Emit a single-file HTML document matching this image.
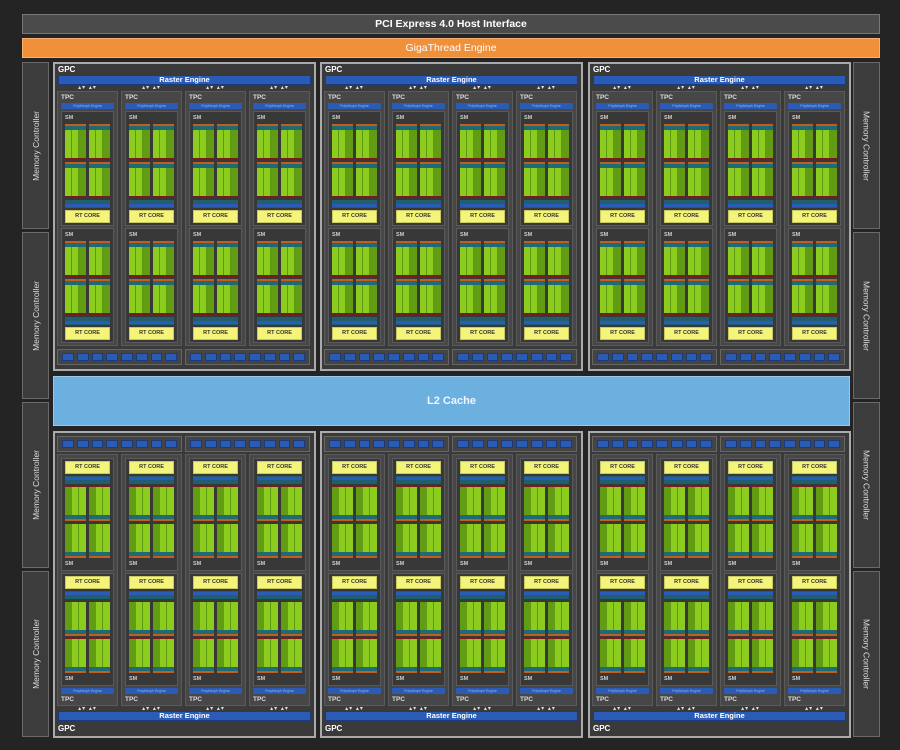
<!DOCTYPE html>
<html><head><meta charset="utf-8"><style>
*{box-sizing:border-box}
body{margin:0;background:#242424;width:900px;height:750px;position:relative;overflow:hidden;font-family:"Liberation Sans",sans-serif}
.pci{position:absolute;left:22px;top:14px;width:858px;height:20px;background:#4b4b4b;border:1px solid #777;color:#fff;font-size:10.5px;font-weight:bold;text-align:center;line-height:18px}
.giga{position:absolute;left:22px;top:38px;width:858px;height:20px;background:#f0903a;border:1px solid #f8b070;color:#fff;font-size:10.5px;text-align:center;line-height:18px}
.mc{position:absolute;width:27px;background:#3c3c3c;border:1px solid #6a6a6a;display:flex;align-items:center;justify-content:center;color:#ddd;font-size:8.5px}
.mc span{writing-mode:vertical-rl;white-space:nowrap}
.mc.l span{transform:rotate(180deg)}
.l2{position:absolute;left:53px;top:376px;width:797px;height:50px;background:#6cb0e0;border:1px solid #9cc8e8;color:#eef6ff;font-size:11px;font-weight:bold;text-align:center;line-height:48px}
.gpc{position:absolute;width:263px;height:309px;border:2px solid #aaa;background:#3a3a3a}
.gpc.bot{height:307px}
.gl{position:absolute;left:3px;top:1px;color:#fff;font-size:8px;font-weight:bold}
.re{position:absolute;left:3px;top:11px;width:253px;height:10px;background:#2a5bb5;border:1px solid #1a3a80;color:#fff;font-size:7.5px;font-weight:bold;text-align:center;line-height:8px}
.ar{position:absolute;left:2px;top:21px;display:flex;gap:3px}
.ar span{width:61px;text-align:center;color:#ddd;font-size:6px;line-height:6px;letter-spacing:1px}
.tpcs{position:absolute;left:2px;top:27px;display:flex;gap:3px}
.tpc{width:61px;height:255px;display:flex;flex-direction:column;gap:2px;padding:2px 3px;background:#474747;border:1px solid #5a5a5a}
.tpc>i{display:block;height:7px;font-style:normal;color:#ddd;font-size:6.5px;font-weight:bold;line-height:7px}
.tpc>p{margin:0;height:6px;background:#2a5bb5;color:#9bb8e8;font-size:3.5px;text-align:center;line-height:6px;white-space:nowrap;overflow:hidden}
.sm{height:115px;display:flex;flex-direction:column;gap:2px;padding:2px 3px;background:#383838;border:1px solid #5a5a5a}
.sm>i{display:block;height:8px;font-style:normal;color:#ccc;font-size:5.5px;font-weight:bold;line-height:8px}
.sm>b{display:block;height:37px;background:
 linear-gradient(to right,transparent 0 21px,#383838 21px 24px,transparent 24px) 0 0/24px 100% repeat-x,
 linear-gradient(to bottom,#c0601a 0 2px,#1e6a78 2px 6px,transparent 6px 34px,#7a1a1a 34px) ,
 linear-gradient(to right,#8ccc1e 0 6px,#5e9a10 6px 7px,#8ccc1e 7px 13px,#5e9a10 13px 14px,#629c12 14px 21px) 0 0/24px 100% repeat-x}
.bot .sm>b{background:
 linear-gradient(to right,transparent 0 21px,#383838 21px 24px,transparent 24px) 0 0/24px 100% repeat-x,
 linear-gradient(to top,#c0601a 0 2px,#1e6a78 2px 6px,transparent 6px 34px,#7a1a1a 34px),
 linear-gradient(to right,#629c12 0 7px,#8ccc1e 7px 13px,#5e9a10 13px 14px,#8ccc1e 14px 21px) 0 0/24px 100% repeat-x}
.sm>s{display:block;height:8px;background:linear-gradient(to bottom,#1f5f6e 0 4px,#2a5bb5 4px 7px,#1f5f6e 7px)}
.bot .sm>s{background:linear-gradient(to top,#1f5f6e 0 4px,#2a5bb5 4px 7px,#1f5f6e 7px)}
.sm>u{display:block;height:13px;background:#f4f47a;border:1px solid #c8c860;color:#333;font-size:5.5px;font-weight:bold;text-align:center;line-height:11px;text-decoration:none}
.st{position:absolute;left:2px;top:285px;display:flex;gap:3px}
.g{width:125px;height:16px;background:#444;border:1px solid #666;display:flex;gap:3px;padding:3px 4px}
.g span{flex:1;background:#2a5bb5;border:1px solid #1a3a80}
.bot .tpc,.bot .sm{flex-direction:column-reverse}
.bot .tpc{height:252px}
.bot .sm{height:113px}
.bot .sm>b{height:36px}
.bot .st{top:3px}
.bot .tpcs{top:21px}
.bot .ar{top:273px}
.bot .re{top:278px}
.bot .gl{top:291px}
</style></head><body>
<div class="pci">PCI Express 4.0 Host Interface</div>
<div class="giga">GigaThread Engine</div>
<div class="mc l" style="left:22px;top:62px;height:167px"><span>Memory Controller</span></div>
<div class="mc l" style="left:22px;top:232px;height:167px"><span>Memory Controller</span></div>
<div class="mc l" style="left:22px;top:402px;height:166px"><span>Memory Controller</span></div>
<div class="mc l" style="left:22px;top:571px;height:166px"><span>Memory Controller</span></div>
<div class="mc" style="left:853px;top:62px;height:167px"><span>Memory Controller</span></div>
<div class="mc" style="left:853px;top:232px;height:167px"><span>Memory Controller</span></div>
<div class="mc" style="left:853px;top:402px;height:166px"><span>Memory Controller</span></div>
<div class="mc" style="left:853px;top:571px;height:166px"><span>Memory Controller</span></div>
<div class="l2">L2 Cache</div>

<div class="gpc" style="left:53px;top:62px"><div class="gl">GPC</div><div class="re">Raster Engine</div><div class="ar"><span>▴▾ ▴▾</span><span>▴▾ ▴▾</span><span>▴▾ ▴▾</span><span>▴▾ ▴▾</span></div><div class="tpcs">
<div class="tpc"><i>TPC</i><p>PolyMorph Engine</p><div class="sm"><i>SM</i><b></b><b></b><s></s><u>RT CORE</u></div><div class="sm"><i>SM</i><b></b><b></b><s></s><u>RT CORE</u></div></div>
<div class="tpc"><i>TPC</i><p>PolyMorph Engine</p><div class="sm"><i>SM</i><b></b><b></b><s></s><u>RT CORE</u></div><div class="sm"><i>SM</i><b></b><b></b><s></s><u>RT CORE</u></div></div>
<div class="tpc"><i>TPC</i><p>PolyMorph Engine</p><div class="sm"><i>SM</i><b></b><b></b><s></s><u>RT CORE</u></div><div class="sm"><i>SM</i><b></b><b></b><s></s><u>RT CORE</u></div></div>
<div class="tpc"><i>TPC</i><p>PolyMorph Engine</p><div class="sm"><i>SM</i><b></b><b></b><s></s><u>RT CORE</u></div><div class="sm"><i>SM</i><b></b><b></b><s></s><u>RT CORE</u></div></div>
</div><div class="st"><div class="g"><span></span><span></span><span></span><span></span><span></span><span></span><span></span><span></span></div><div class="g"><span></span><span></span><span></span><span></span><span></span><span></span><span></span><span></span></div></div></div>

<div class="gpc" style="left:320px;top:62px"><div class="gl">GPC</div><div class="re">Raster Engine</div><div class="ar"><span>▴▾ ▴▾</span><span>▴▾ ▴▾</span><span>▴▾ ▴▾</span><span>▴▾ ▴▾</span></div><div class="tpcs">
<div class="tpc"><i>TPC</i><p>PolyMorph Engine</p><div class="sm"><i>SM</i><b></b><b></b><s></s><u>RT CORE</u></div><div class="sm"><i>SM</i><b></b><b></b><s></s><u>RT CORE</u></div></div>
<div class="tpc"><i>TPC</i><p>PolyMorph Engine</p><div class="sm"><i>SM</i><b></b><b></b><s></s><u>RT CORE</u></div><div class="sm"><i>SM</i><b></b><b></b><s></s><u>RT CORE</u></div></div>
<div class="tpc"><i>TPC</i><p>PolyMorph Engine</p><div class="sm"><i>SM</i><b></b><b></b><s></s><u>RT CORE</u></div><div class="sm"><i>SM</i><b></b><b></b><s></s><u>RT CORE</u></div></div>
<div class="tpc"><i>TPC</i><p>PolyMorph Engine</p><div class="sm"><i>SM</i><b></b><b></b><s></s><u>RT CORE</u></div><div class="sm"><i>SM</i><b></b><b></b><s></s><u>RT CORE</u></div></div>
</div><div class="st"><div class="g"><span></span><span></span><span></span><span></span><span></span><span></span><span></span><span></span></div><div class="g"><span></span><span></span><span></span><span></span><span></span><span></span><span></span><span></span></div></div></div>

<div class="gpc" style="left:588px;top:62px"><div class="gl">GPC</div><div class="re">Raster Engine</div><div class="ar"><span>▴▾ ▴▾</span><span>▴▾ ▴▾</span><span>▴▾ ▴▾</span><span>▴▾ ▴▾</span></div><div class="tpcs">
<div class="tpc"><i>TPC</i><p>PolyMorph Engine</p><div class="sm"><i>SM</i><b></b><b></b><s></s><u>RT CORE</u></div><div class="sm"><i>SM</i><b></b><b></b><s></s><u>RT CORE</u></div></div>
<div class="tpc"><i>TPC</i><p>PolyMorph Engine</p><div class="sm"><i>SM</i><b></b><b></b><s></s><u>RT CORE</u></div><div class="sm"><i>SM</i><b></b><b></b><s></s><u>RT CORE</u></div></div>
<div class="tpc"><i>TPC</i><p>PolyMorph Engine</p><div class="sm"><i>SM</i><b></b><b></b><s></s><u>RT CORE</u></div><div class="sm"><i>SM</i><b></b><b></b><s></s><u>RT CORE</u></div></div>
<div class="tpc"><i>TPC</i><p>PolyMorph Engine</p><div class="sm"><i>SM</i><b></b><b></b><s></s><u>RT CORE</u></div><div class="sm"><i>SM</i><b></b><b></b><s></s><u>RT CORE</u></div></div>
</div><div class="st"><div class="g"><span></span><span></span><span></span><span></span><span></span><span></span><span></span><span></span></div><div class="g"><span></span><span></span><span></span><span></span><span></span><span></span><span></span><span></span></div></div></div>

<div class="gpc bot" style="left:53px;top:431px"><div class="gl">GPC</div><div class="re">Raster Engine</div><div class="ar"><span>▴▾ ▴▾</span><span>▴▾ ▴▾</span><span>▴▾ ▴▾</span><span>▴▾ ▴▾</span></div><div class="tpcs">
<div class="tpc"><i>TPC</i><p>PolyMorph Engine</p><div class="sm"><i>SM</i><b></b><b></b><s></s><u>RT CORE</u></div><div class="sm"><i>SM</i><b></b><b></b><s></s><u>RT CORE</u></div></div>
<div class="tpc"><i>TPC</i><p>PolyMorph Engine</p><div class="sm"><i>SM</i><b></b><b></b><s></s><u>RT CORE</u></div><div class="sm"><i>SM</i><b></b><b></b><s></s><u>RT CORE</u></div></div>
<div class="tpc"><i>TPC</i><p>PolyMorph Engine</p><div class="sm"><i>SM</i><b></b><b></b><s></s><u>RT CORE</u></div><div class="sm"><i>SM</i><b></b><b></b><s></s><u>RT CORE</u></div></div>
<div class="tpc"><i>TPC</i><p>PolyMorph Engine</p><div class="sm"><i>SM</i><b></b><b></b><s></s><u>RT CORE</u></div><div class="sm"><i>SM</i><b></b><b></b><s></s><u>RT CORE</u></div></div>
</div><div class="st"><div class="g"><span></span><span></span><span></span><span></span><span></span><span></span><span></span><span></span></div><div class="g"><span></span><span></span><span></span><span></span><span></span><span></span><span></span><span></span></div></div></div>

<div class="gpc bot" style="left:320px;top:431px"><div class="gl">GPC</div><div class="re">Raster Engine</div><div class="ar"><span>▴▾ ▴▾</span><span>▴▾ ▴▾</span><span>▴▾ ▴▾</span><span>▴▾ ▴▾</span></div><div class="tpcs">
<div class="tpc"><i>TPC</i><p>PolyMorph Engine</p><div class="sm"><i>SM</i><b></b><b></b><s></s><u>RT CORE</u></div><div class="sm"><i>SM</i><b></b><b></b><s></s><u>RT CORE</u></div></div>
<div class="tpc"><i>TPC</i><p>PolyMorph Engine</p><div class="sm"><i>SM</i><b></b><b></b><s></s><u>RT CORE</u></div><div class="sm"><i>SM</i><b></b><b></b><s></s><u>RT CORE</u></div></div>
<div class="tpc"><i>TPC</i><p>PolyMorph Engine</p><div class="sm"><i>SM</i><b></b><b></b><s></s><u>RT CORE</u></div><div class="sm"><i>SM</i><b></b><b></b><s></s><u>RT CORE</u></div></div>
<div class="tpc"><i>TPC</i><p>PolyMorph Engine</p><div class="sm"><i>SM</i><b></b><b></b><s></s><u>RT CORE</u></div><div class="sm"><i>SM</i><b></b><b></b><s></s><u>RT CORE</u></div></div>
</div><div class="st"><div class="g"><span></span><span></span><span></span><span></span><span></span><span></span><span></span><span></span></div><div class="g"><span></span><span></span><span></span><span></span><span></span><span></span><span></span><span></span></div></div></div>

<div class="gpc bot" style="left:588px;top:431px"><div class="gl">GPC</div><div class="re">Raster Engine</div><div class="ar"><span>▴▾ ▴▾</span><span>▴▾ ▴▾</span><span>▴▾ ▴▾</span><span>▴▾ ▴▾</span></div><div class="tpcs">
<div class="tpc"><i>TPC</i><p>PolyMorph Engine</p><div class="sm"><i>SM</i><b></b><b></b><s></s><u>RT CORE</u></div><div class="sm"><i>SM</i><b></b><b></b><s></s><u>RT CORE</u></div></div>
<div class="tpc"><i>TPC</i><p>PolyMorph Engine</p><div class="sm"><i>SM</i><b></b><b></b><s></s><u>RT CORE</u></div><div class="sm"><i>SM</i><b></b><b></b><s></s><u>RT CORE</u></div></div>
<div class="tpc"><i>TPC</i><p>PolyMorph Engine</p><div class="sm"><i>SM</i><b></b><b></b><s></s><u>RT CORE</u></div><div class="sm"><i>SM</i><b></b><b></b><s></s><u>RT CORE</u></div></div>
<div class="tpc"><i>TPC</i><p>PolyMorph Engine</p><div class="sm"><i>SM</i><b></b><b></b><s></s><u>RT CORE</u></div><div class="sm"><i>SM</i><b></b><b></b><s></s><u>RT CORE</u></div></div>
</div><div class="st"><div class="g"><span></span><span></span><span></span><span></span><span></span><span></span><span></span><span></span></div><div class="g"><span></span><span></span><span></span><span></span><span></span><span></span><span></span><span></span></div></div></div>
</body></html>
